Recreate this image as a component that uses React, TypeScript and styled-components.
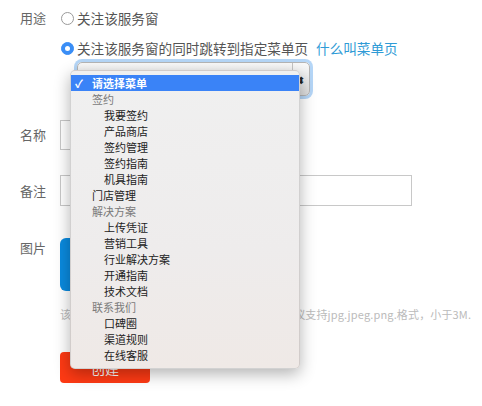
import React from "react";
import styled, { createGlobalStyle } from "styled-components";

const Global = createGlobalStyle`
  html, body { margin: 0; padding: 0; background: #fff; }
  body { font-family: "Noto Sans CJK SC", "Noto Sans", sans-serif; font-size: 13px; color: #666; }
`;

const Page = styled.div`
  position: relative;
  width: 482px;
  height: 406px;
  overflow: hidden;
  padding-left: 20px;
  box-sizing: border-box;
`;

const Row = styled.div<{ $mt: number; $align?: string }>`
  display: flex;
  align-items: ${(p) => p.$align || "center"};
  margin-top: ${(p) => p.$mt}px;
`;

const Label = styled.div<{ $pt?: number }>`
  width: 40px;
  flex: none;
  color: #666;
  font-size: 13px;
  line-height: 20px;
  padding-top: ${(p) => p.$pt || 0}px;
`;

const Col = styled.div`
  display: flex;
  flex-direction: column;
`;

const RadioLine = styled.label<{ $mt?: number }>`
  display: flex;
  align-items: center;
  height: 20px;
  margin-top: ${(p) => p.$mt || 0}px;
  color: #555;
  font-size: 13.6px;
  white-space: nowrap;
`;

const RadioDot = styled.span<{ $on?: boolean }>`
  width: 13px;
  height: 13px;
  box-sizing: border-box;
  border-radius: 50%;
  margin: 0 3px 0 1px;
  border: 1px solid ${(p) => (p.$on ? "#3a8ef6" : "#9a9a9a")};
  background: ${(p) => (p.$on ? "#3a8ef6" : "#fff")};
  display: flex;
  align-items: center;
  justify-content: center;
  &::after {
    content: "";
    display: ${(p) => (p.$on ? "block" : "none")};
    width: 5px;
    height: 5px;
    border-radius: 50%;
    background: #fff;
  }
`;

const Link = styled.span`
  color: #2f9bd6;
  margin-left: 8px;
`;

const SelectBox = styled.div`
  margin: 4px 0 0 17px;
  width: 233px;
  height: 34px;
  box-sizing: border-box;
  border-radius: 5px;
  box-shadow: 0 0 0 3px rgba(120, 180, 240, 0.55);
  background: linear-gradient(#fafafa, #dcdcdc);
  border: 1px solid #b5b5b5;
  display: flex;
  justify-content: flex-end;
`;

const SelectArrow = styled.div`
  width: 16px;
  border-left: 1px solid #c4c4c4;
  display: flex;
  align-items: center;
  justify-content: center;
  font-size: 10px;
  color: #222;
`;

const TextInput = styled.div<{ $w: number; $h: number }>`
  width: ${(p) => p.$w}px;
  height: ${(p) => p.$h}px;
  box-sizing: border-box;
  border: 1px solid #c8c8c8;
  background: #fff;
`;

const UploadButton = styled.div`
  width: 90px;
  height: 53px;
  border-radius: 6px;
  background: #0a8ade;
`;

const Hint = styled.div`
  margin: 15px 0 0 40px;
  color: #bbb;
  font-size: 11px;
  line-height: 16px;
  letter-spacing: 0.15px;
  white-space: nowrap;
`;

const SubmitButton = styled.div`
  margin: 30px 0 0 40px;
  width: 90px;
  height: 31px;
  border-radius: 4px;
  background: #fe3a14;
  color: #fff;
  font-size: 14px;
  display: flex;
  align-items: center;
  justify-content: center;
`;

const Menu = styled.div`
  position: absolute;
  left: 70px;
  top: 70px;
  width: 230px;
  padding: 4px 0 5px;
  box-sizing: border-box;
  border-radius: 5px;
  background: linear-gradient(#f0f0f0, #eeecec 60%, #efe9e6);
  border: 1px solid rgba(0, 0, 0, 0.12);
  box-shadow: 0 5px 16px rgba(0, 0, 0, 0.3);
`;

const Item = styled.div<{ $kind: "sel" | "group" | "top" | "sub" }>`
  height: 16px;
  line-height: 16px;
  font-size: 11px;
  position: relative;
  white-space: nowrap;
  padding-left: ${(p) => (p.$kind === "sub" ? 33 : 21)}px;
  color: ${(p) => (p.$kind === "sel" ? "#fff" : p.$kind === "group" ? "#7a7a7a" : "#222")};
  background: ${(p) => (p.$kind === "sel" ? "#3a83f7" : "transparent")};
  font-weight: ${(p) => (p.$kind === "sel" ? 600 : 400)};
`;

const Check = styled.span`
  position: absolute;
  left: 4px;
  top: 0;
  font-size: 11px;
  font-weight: 700;
`;

type Entry = { t: string; k: "sel" | "group" | "top" | "sub" };

const items: Entry[] = [
  { t: "请选择菜单", k: "sel" },
  { t: "签约", k: "group" },
  { t: "我要签约", k: "sub" },
  { t: "产品商店", k: "sub" },
  { t: "签约管理", k: "sub" },
  { t: "签约指南", k: "sub" },
  { t: "机具指南", k: "sub" },
  { t: "门店管理", k: "top" },
  { t: "解决方案", k: "group" },
  { t: "上传凭证", k: "sub" },
  { t: "营销工具", k: "sub" },
  { t: "行业解决方案", k: "sub" },
  { t: "开通指南", k: "sub" },
  { t: "技术文档", k: "sub" },
  { t: "联系我们", k: "group" },
  { t: "口碑圈", k: "sub" },
  { t: "渠道规则", k: "sub" },
  { t: "在线客服", k: "sub" },
];

export default function App() {
  return (
    <>
      <Global />
      <Page>
        <Row $mt={8} $align="flex-start">
          <Label>用途</Label>
          <Col>
            <RadioLine>
              <RadioDot />
              关注该服务窗
            </RadioLine>
            <RadioLine $mt={10}>
              <RadioDot $on />
              关注该服务窗的同时跳转到指定菜单页
              <Link>什么叫菜单页</Link>
            </RadioLine>
            <SelectBox>
              <SelectArrow>⬍</SelectArrow>
            </SelectBox>
          </Col>
        </Row>
        <Row $mt={24}>
          <Label>名称</Label>
          <TextInput $w={230} $h={30} />
        </Row>
        <Row $mt={25}>
          <Label>备注</Label>
          <TextInput $w={352} $h={31} />
        </Row>
        <Row $mt={32} $align="flex-start">
          <Label $pt={-2}>图片</Label>
          <UploadButton />
        </Row>
        <Hint>该图片将作为服务窗菜单页的封面图片展示，建议支持jpg.jpeg.png.格式，小于3M.</Hint>
        <SubmitButton>创建</SubmitButton>
        <Menu>
          {items.map((it) => (
            <Item key={it.t} $kind={it.k}>
              {it.k === "sel" && <Check>✓</Check>}
              {it.t}
            </Item>
          ))}
        </Menu>
      </Page>
    </>
  );
}
